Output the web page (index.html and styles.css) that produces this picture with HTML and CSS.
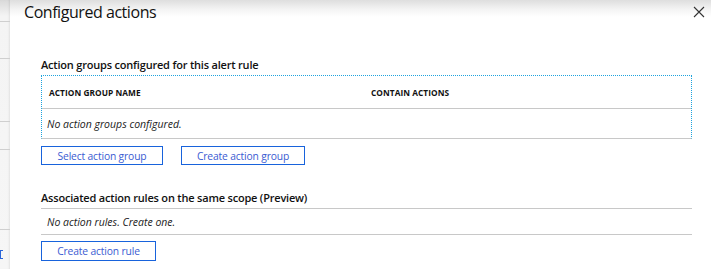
FILE: index.html
```html
<!DOCTYPE html>
<html>
<head>
<meta charset="utf-8">
<link rel="stylesheet" href="styles.css">
</head>
<body>
<div class="page">
  <div class="side">
    <div class="side-seg s1"></div>
    <div class="side-seg s2"></div>
    <div class="side-seg s3"></div>
    <div class="side-seg s4"></div>
    <div class="side-seg s5"></div>
    <div class="side-mark"></div>
  </div>
  <div class="panel">
    <header class="panel-head">
      <h1 class="title">Configured actions</h1>
      <button class="close" aria-label="Close">
        <svg width="12" height="12" viewBox="0 0 12 12"><path d="M1 1 L11 11 M11 1 L1 11" stroke="#333" stroke-width="1.1" fill="none"/></svg>
      </button>
    </header>
    <div class="content">
      <section class="sec sec-groups">
        <h2 class="sec-title">Action groups configured for this alert rule</h2>
        <div class="grid">
          <div class="grid-head">
            <span>ACTION GROUP NAME</span>
            <span>CONTAIN ACTIONS</span>
          </div>
          <div class="grid-row">No action groups configured.</div>
        </div>
        <div class="btns">
          <button class="btn btn-select">Select action group</button>
          <button class="btn btn-create">Create action group</button>
        </div>
      </section>
      <section class="sec sec-rules">
        <h2 class="sec-title">Associated action rules on the same scope (Preview)</h2>
        <div class="rule-row">No action rules. Create one.</div>
        <div class="btns">
          <button class="btn btn-rule">Create action rule</button>
        </div>
      </section>
    </div>
  </div>
</div>
</body>
</html>
```
FILE: styles.css
```css
* { box-sizing: border-box; }
html, body { margin: 0; padding: 0; }
body {
  width: 711px;
  height: 269px;
  overflow: hidden;
  background: #fff;
  font-family: "Open Sans", "Noto Sans", sans-serif;
  color: #000;
}
.page {
  display: flex;
  height: 269px;
}
.side {
  width: 10px;
  flex: none;
  display: flex;
  flex-direction: column;
  background: linear-gradient(#d9d9d9 0, #f4f4f4 16px, #f6f6f6 100%);
  box-shadow: inset -2px 0 2px -1px rgba(0,0,0,0.08);
}
.side-seg { border-bottom: 1px solid #cfcfcf; }
.s1 { height: 22px; }
.s2 { height: 37px; }
.s3 { height: 63px; }
.s4 { height: 28px; }
.s5 { height: 80px; }
.side-mark {
  margin-top: 20px;
  width: 3px;
  height: 9px;
  border: 1px solid #2b66d9;
  border-right: none;
}
.panel {
  flex: 1;
  background: linear-gradient(#dedede 0, #f3f3f3 9px, #fff 17px);
  display: flex;
  flex-direction: column;
}
.panel-head {
  display: flex;
  align-items: flex-start;
  justify-content: space-between;
  padding: 0 6px 0 14px;
  height: 57px;
}
.title {
  margin: 0;
  font-size: 16px;
  font-weight: 400;
  line-height: 25px;
  letter-spacing: -0.45px;
  color: #111;
}
.close {
  margin-top: 6px;
  padding: 0;
  border: none;
  background: none;
  width: 12px;
  height: 12px;
  display: flex;
}
.content {
  padding: 0 19px 0 31px;
}
.sec-title {
  margin: 0;
  font-size: 11px;
  font-weight: 600;
  line-height: 16px;
  letter-spacing: -0.2px;
  color: #111;
}
.sec-groups .sec-title { margin-bottom: 2px; }
.grid {
  border: 1px dotted #1ea3dd;
  border-bottom: 1px solid #c8c8c8;
}
.grid-head {
  display: grid;
  grid-template-columns: 322px 1fr;
  padding-left: 7px;
  height: 33px;
  align-items: center;
  border-bottom: 1px solid #c8c8c8;
  font-size: 8.3px;
  font-weight: 700;
  color: #111;
  letter-spacing: 0.05px;
}
.grid-row {
  height: 29px;
  display: flex;
  align-items: center;
  padding-left: 5px;
  font-size: 10.5px;
  font-style: italic;
  color: #222;
}
.btns {
  display: flex;
  gap: 18px;
  margin-top: 7px;
}
.btn {
  font-family: inherit;
  background: #fff;
  border: 1px solid #1863dc;
  color: #3a5bd2;
  font-size: 10.3px;
  letter-spacing: -0.15px;
  height: 19px;
  padding: 0;
  line-height: 16px;
}
.btn-select { width: 122px; }
.btn-create { width: 124px; }
.sec-rules { margin-top: 25px; }
.sec-rules .sec-title { padding-bottom: 2px; }
.rule-row {
  border-top: 1px solid #c8c8c8;
  border-bottom: 1px solid #c8c8c8;
  height: 27px;
  display: flex;
  align-items: center;
  padding-left: 6px;
  font-size: 10.5px;
  font-style: italic;
  color: #222;
}
.sec-rules .btns { margin-top: 6px; }
.btn-rule { width: 115px; height: 20px; }
```
